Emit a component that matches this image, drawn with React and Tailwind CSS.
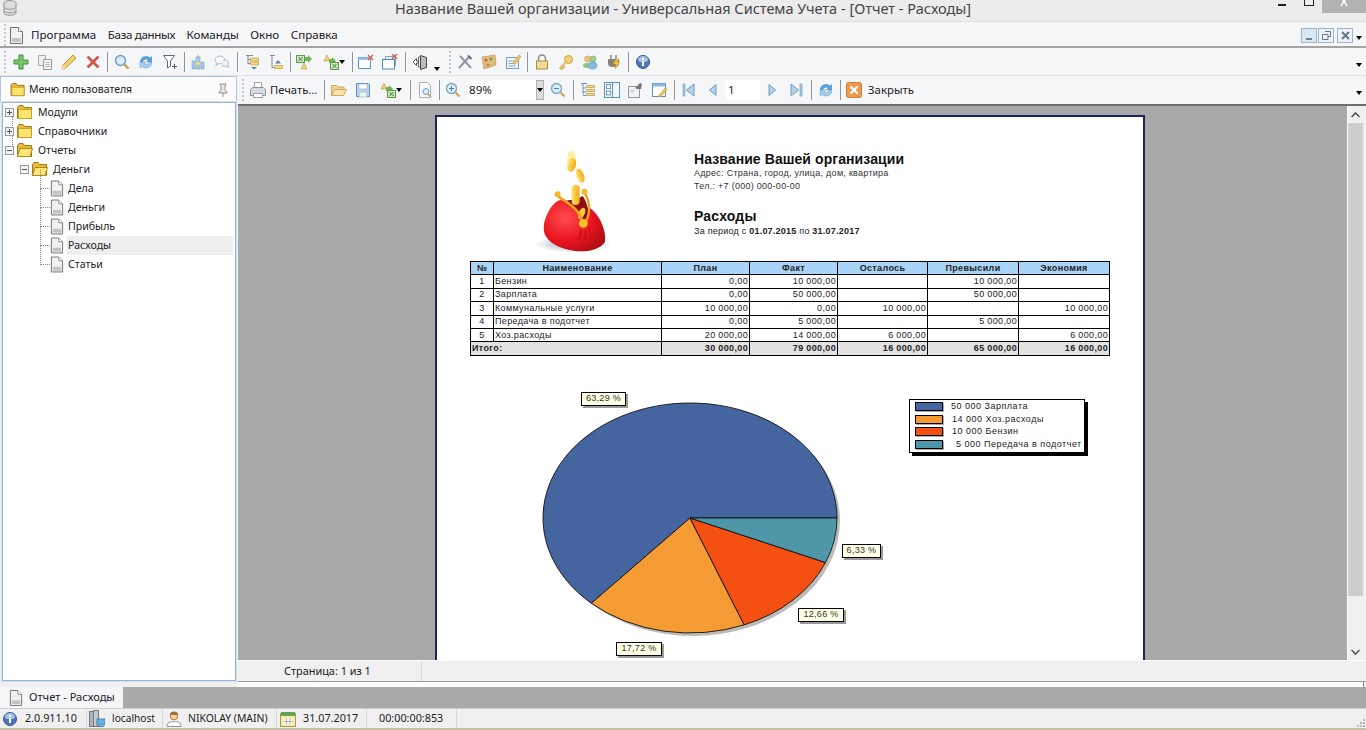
import { useId } from 'react';

const uiFont = "font-['Noto_Sans',sans-serif]";

function Doc({ className = 'w-[15px] h-[17px]' }) {
    return (
        <svg viewBox="0 0 15 17" className={className}>
            <path d="M1.5 .5h8l4 4v12h-12z" fill="#f1f1f1" stroke="#6f6f6f" />
            <path d="M9.5 .5v4h4" fill="#fff" stroke="#8a8a8a" />
            <rect x="3" y="11" width="9" height="4" fill="#c4c4c4" />
        </svg>
    );
}

function Folder({ open = false, className = 'w-[16px] h-[15px]' }) {
    return (
        <svg viewBox="0 0 16 15" className={className}>
            <path d="M.5 13.5v-11l1.5-2h4l1.5 2h7v11z" fill="#e9b93a" stroke="#9c7a1c" />
            {open ? (
                <path d="M.5 13.5l2.5-8h12.5l-2.5 8z" fill="#fde675" stroke="#a98a20" />
            ) : (
                <rect x="1.5" y="4.5" width="13" height="9" fill="#fde56d" stroke="#c7a02c" />
            )}
        </svg>
    );
}

const s = 'w-4 h-4';
const icons = {
    plus: <svg viewBox="0 0 16 16" className={s}><path d="M6 1h4v5h5v4h-5v5H6v-5H1V6h5z" fill="#7cc76a" stroke="#3f8d3a" /></svg>,
    copy: <svg viewBox="0 0 16 16" className={s}><path d="M1.5 1.5h7v10h-7z" fill="#eee" stroke="#aaa" /><path d="M6.5 5.5h8v10h-8z" fill="#f6f6f6" stroke="#999" /><path d="M8 8.5h5M8 10.5h5M8 12.5h5" stroke="#bbb" /></svg>,
    pencil: <svg viewBox="0 0 16 16" className={s}><path d="M1 15l1-4L12 1l3 3L5 14z" fill="#f2cf6a" stroke="#c29a3a" /><path d="M1 15l1-4 3 3z" fill="#f6e3bd" /></svg>,
    del: <svg viewBox="0 0 16 16" className={s}><path d="M2 3.5L3.5 2 8 6.5 12.5 2 14 3.5 9.5 8l4.5 4.5-1.5 1.5L8 9.5 3.5 14 2 12.5 6.5 8z" fill="#d8534a" stroke="#a83a33" strokeWidth=".6" /></svg>,
    search: <svg viewBox="0 0 16 16" className={s}><circle cx="6.5" cy="6.5" r="5" fill="#d8ecfb" stroke="#6b9cc4" strokeWidth="1.4" /><path d="M10.5 10.5l4 4" stroke="#c79a4e" strokeWidth="2.4" /></svg>,
    refresh: <svg viewBox="0 0 16 16" className={s}><path d="M2 8a6 6 0 0 1 10-4.500L14 2v6H8l2-2a3.500 3.500 0 0 0-5 2z" fill="#5c9fd6" /><path d="M14 8a6 6 0 0 1-10 4.500L2 14V8h6l-2 2a3.500 3.500 0 0 0 5-2z" fill="#a9cdea" stroke="#5c9fd6" strokeWidth=".5" /></svg>,
    filter: <svg viewBox="0 0 16 16" className={s}><path d="M1.500 1.500h11L8.500 7v5l-3 2V7z" fill="#fff" stroke="#5a6a78" /><path d="M12.500 10v5M10 12.500h5" stroke="#555" /></svg>,
    building: <svg viewBox="0 0 16 16" className={s}><path d="M2 15V7h3v8zM6 15V3h4v12zM11 15V8h3v7z" fill="#a8cdea" stroke="#6d9dc4" strokeWidth=".6" /><path d="M6 8h4v3H6z" fill="#f3d574" /><path d="M8 0l1 3H7z" fill="#e5b73f" /></svg>,
    chat: <svg viewBox="0 0 16 16" className={s}><path d="M1 6a5 4 0 0 1 10 0 5 4 0 0 1-7 3.600L2 12l.5-3.500A4 4 0 0 1 1 6z" fill="#f7f9fb" stroke="#a9bdcf" /><path d="M9 6.500a3.500 3 0 0 1 5 4l.5 3-2.500-1.500a4 3 0 0 1-4-.5" fill="#eef3f7" stroke="#a9bdcf" /></svg>,
    treeDown: <svg viewBox="0 0 16 16" className={s}><path d="M2 1.500h7M4 1.500v9M4 5.500h2M4 9.500h2" stroke="#7b8a98" fill="none" /><path d="M6.500 4h8v3h-8zM6.500 8h8v3h-8z" fill="#f4d98a" stroke="#c29c3c" strokeWidth=".7" /><path d="M7 13h6l-3 2.500z" fill="#5a7fa8" /></svg>,
    treeUp: <svg viewBox="0 0 16 16" className={s}><path d="M2 1.500h5M4 1.500v12M4 13.500h2" stroke="#7b8a98" fill="none" /><path d="M6.500 11.500h8v3h-8z" fill="#f4d98a" stroke="#c29c3c" strokeWidth=".7" /><path d="M7 9.500h6L10 6z" fill="#5a7fa8" /></svg>,
    excel: <svg viewBox="0 0 16 16" className={s}><rect x=".5" y="1.500" width="8" height="7" fill="#cde5c3" stroke="#5d9a4c" /><path d="M2.500 3l4 4M6.500 3l-4 4" stroke="#3d7d34" /><path d="M9 3h3V1l4 4-4 4V7H9z" fill="#6fb456" /><path d="M5 15l3-6 3 6z" fill="#f2d27a" stroke="#bd9738" strokeWidth=".6" /></svg>,
    excel2: <svg viewBox="0 0 16 16" className={s}><path d="M1 7l3-6 3 6z" fill="#f2d27a" stroke="#bd9738" strokeWidth=".6" /><path d="M6 5h3V3l4 4-4 4V9H6z" fill="#6fb456" /><rect x="7.500" y="8.500" width="8" height="7" fill="#cde5c3" stroke="#5d9a4c" /><path d="M9.500 10l4 4M13.500 10l-4 4" stroke="#3d7d34" /></svg>,
    win: <svg viewBox="0 0 16 16" className={s}><rect x=".5" y="3.500" width="12" height="11" fill="#fff" stroke="#5b93c2" /><rect x=".5" y="3.500" width="12" height="2.500" fill="#9cc4e4" /><path d="M10 1l5 5M15 1l-5 5" stroke="#d2654c" strokeWidth="1.500" /></svg>,
    win2: <svg viewBox="0 0 16 16" className={s}><rect x="3.500" y="2.500" width="10" height="9" fill="#e4eef6" stroke="#7ba6c8" /><rect x=".5" y="5.500" width="12" height="9.500" fill="#fff" stroke="#4f8abb" /><path d="M10 0l5 5M15 0l-5 5" stroke="#d2654c" strokeWidth="1.500" /></svg>,
    exit: <svg viewBox="0 0 16 16" className={s}><path d="M8.500 1.500l6 2v10l-6 2z" fill="#bdbdbd" stroke="#444" /><path d="M8.500 3h-2v10h2" fill="none" stroke="#666" /><path d="M1 8l3.500-3.500V7h2v2h-2v2.500z" fill="#fff" stroke="#333" strokeWidth=".8" /></svg>,
    tools: <svg viewBox="0 0 16 16" className={s}><path d="M2 14L12 3M3 2l11 12" stroke="#8c98a3" strokeWidth="2" /><path d="M11 1.500l3.500 3.500" stroke="#5f6d78" strokeWidth="2" /></svg>,
    paint: <svg viewBox="0 0 16 16" className={s}><path d="M1 3l13-2 1 10-12 4z" fill="#e0bd7c" stroke="#b4935a" strokeWidth=".7" /><circle cx="5" cy="6" r="1.500" fill="#d9573c" /><circle cx="10" cy="5" r="1.500" fill="#6d9b4b" /><circle cx="7" cy="11" r="1.500" fill="#c9843b" /></svg>,
    edit: <svg viewBox="0 0 16 16" className={s}><rect x="1.500" y="3.500" width="12" height="11" fill="#eef4fa" stroke="#7ba0c0" /><path d="M3.500 7h6M3.500 9.500h7M3.500 12h7" stroke="#8aa9c4" /><path d="M8 9l6-8 2 1.500-6 8z" fill="#f1c75d" stroke="#b79236" strokeWidth=".6" /></svg>,
    lock: <svg viewBox="0 0 16 16" className={s}><path d="M4.500 7V4.500a3.500 3.500 0 0 1 7 0V7" fill="none" stroke="#8a8a80" strokeWidth="1.500" /><rect x="2.500" y="7" width="11" height="8" fill="#f1d892" stroke="#a89048" /></svg>,
    key: <svg viewBox="0 0 16 16" className={s}><circle cx="10.500" cy="5.500" r="4" fill="#f3d274" stroke="#c6a03c" /><path d="M7.500 8L2 13.500V15h3v-2h2" fill="#f3d274" stroke="#c6a03c" /></svg>,
    users: <svg viewBox="0 0 16 16" className={s}><circle cx="5.500" cy="5" r="3" fill="#f2c07c" stroke="#c79a57" strokeWidth=".6" /><circle cx="11" cy="5" r="3" fill="#9ad08a" stroke="#6ba85c" strokeWidth=".6" /><ellipse cx="4.500" cy="11.500" rx="3.500" ry="2.500" fill="#94c67f" /><ellipse cx="10.500" cy="11.500" rx="4.500" ry="3.500" fill="#86b8e0" stroke="#5f94c0" strokeWidth=".6" /></svg>,
    plug: <svg viewBox="0 0 16 16" className={s}><path d="M5 1v4M10 1v4" stroke="#8a8a8a" strokeWidth="1.500" /><path d="M2 5h11v4a4 4 0 0 1-4 4H6a4 4 0 0 1-4-4z" fill="#8b8178" /><path d="M10 5l-3 5h3l-1 5 5-7h-3l2-3z" fill="#f2c33c" stroke="#bc8e1e" strokeWidth=".4" /></svg>,
    info: <svg viewBox="0 0 16 16" className={s}><circle cx="8" cy="8" r="6.500" fill="#4f77b5" stroke="#39598e" /><path d="M3 6a5 4 0 0 1 10 0 5 2 0 0 1-10 0" fill="#a7c2e6" /><rect x="7" y="7" width="2" height="5" fill="#fff" /><rect x="7" y="4" width="2" height="2" fill="#fff" /></svg>,
    printer: <svg viewBox="0 0 18 18" className="w-[18px] h-[18px]"><path d="M5.500 1.500h7v6h-7z" fill="#fff" stroke="#9aa3ab" /><path d="M1.500 8.500l2-2h11l2 2v6h-15z" fill="#d6dbe0" stroke="#8d969e" /><path d="M4.500 12.500h9v4h-9z" fill="#fff" stroke="#9aa3ab" /></svg>,
    openFolder: <svg viewBox="0 0 16 16" className={s}><path d="M.5 13.500v-10h5l1.500 1.500h6v2" fill="#f1d390" stroke="#c9a863" /><path d="M.5 13.500l3-6h12l-3 6z" fill="#f9e2a9" stroke="#c9a863" /></svg>,
    save: <svg viewBox="0 0 16 16" className={s}><path d="M1.500 1.500h12l1 1v12h-13z" fill="#bcd6ec" stroke="#5b8fba" /><rect x="4" y="2" width="8" height="5" fill="#fff" stroke="#8eb1cf" strokeWidth=".6" /><rect x="4" y="10" width="8" height="5" fill="#eef3f7" stroke="#8eb1cf" strokeWidth=".6" /></svg>,
    preview: <svg viewBox="0 0 16 16" className={s}><path d="M2.500 .5h8l3 3v12h-11z" fill="#fafafa" stroke="#aab1b8" /><circle cx="9" cy="9.500" r="3" fill="#dceaf6" stroke="#6f9fc6" /><path d="M11 12l3 3" stroke="#d0a25a" strokeWidth="1.600" /></svg>,
    zoomIn: <svg viewBox="0 0 16 16" className={s}><circle cx="6.500" cy="6.500" r="5" fill="#dcecf9" stroke="#7aa4c6" strokeWidth="1.300" /><path d="M4 6.500h5M6.500 4v5" stroke="#4f83ae" /><path d="M10.500 10.500l4 4" stroke="#d0a25a" strokeWidth="2.200" /></svg>,
    zoomOut: <svg viewBox="0 0 16 16" className={s}><circle cx="6.500" cy="6.500" r="5" fill="#dcecf9" stroke="#7aa4c6" strokeWidth="1.300" /><path d="M4 6.500h5" stroke="#4f83ae" /><path d="M10.500 10.500l4 4" stroke="#d0a25a" strokeWidth="2.200" /></svg>,
    tree: <svg viewBox="0 0 16 16" className={s}><path d="M1 1.500h6M3 1.500v11M3 6h3M3 10h3M3 13.500h3" stroke="#6d93b3" fill="none" /><path d="M6.500 3.500h8v2h-8zM6.500 7.500h8v2h-8zM6.500 11.500h8v2h-8z" fill="#f3d98c" stroke="#bf9a3a" strokeWidth=".7" /></svg>,
    layout: <svg viewBox="0 0 16 16" className={s}><rect x=".5" y=".5" width="15" height="15" fill="#f4f8fb" stroke="#5a93be" /><rect x="2.500" y="2.500" width="4" height="4" fill="none" stroke="#6f9cc0" /><rect x="2.500" y="9" width="4" height="4" fill="none" stroke="#6f9cc0" /><path d="M8.500 1v14" stroke="#5a93be" /></svg>,
    thumbs: <svg viewBox="0 0 16 16" className={s}><rect x=".5" y="4.500" width="11" height="11" fill="#f2f2f2" stroke="#8d98a3" /><path d="M2.500 7.500h3v3h-3z" fill="#bcd3e6" /><path d="M7 6l5-5 2 1-1 5h-4z" fill="#777" /></svg>,
    pageEdit: <svg viewBox="0 0 16 16" className={s}><rect x=".5" y="1.500" width="13" height="13" fill="#fdfdfd" stroke="#5a93be" /><rect x=".5" y="1.500" width="13" height="3" fill="#8fb9da" /><path d="M7 13l6-7 2 1.500-6 7-2.500 .5z" fill="#f1c75d" stroke="#b79236" strokeWidth=".6" /></svg>,
    first: <svg viewBox="0 0 16 16" className={s}><rect x="2" y="2" width="2" height="12" fill="#a8c8e2" stroke="#6c9cc2" strokeWidth=".6" /><path d="M13 2v12L5.500 8z" fill="#b7d2e8" stroke="#6c9cc2" /></svg>,
    prev: <svg viewBox="0 0 16 16" className={s}><path d="M11 2.500v11L4.500 8z" fill="#b7d2e8" stroke="#6c9cc2" /></svg>,
    next: <svg viewBox="0 0 16 16" className={s}><path d="M5 2.500v11L11.500 8z" fill="#b7d2e8" stroke="#6c9cc2" /></svg>,
    last: <svg viewBox="0 0 16 16" className={s}><rect x="12" y="2" width="2" height="12" fill="#a8c8e2" stroke="#6c9cc2" strokeWidth=".6" /><path d="M3 2v12l7.500-6z" fill="#b7d2e8" stroke="#6c9cc2" /></svg>,
    closeBox: <svg viewBox="0 0 16 16" className={s}><rect x=".5" y=".5" width="15" height="15" rx="2" fill="#ec9a4f" stroke="#cf7d33" /><path d="M4.500 4.500l7 7M11.500 4.500l-7 7" stroke="#fff" strokeWidth="2.200" /></svg>,
    server: <svg viewBox="0 0 16 18" className="w-4 h-[18px]"><rect x=".5" y="1.500" width="4" height="15" fill="#aeb4ba" stroke="#70777e" /><rect x="4.500" y=".5" width="5" height="16" fill="#c5cacf" stroke="#70777e" /><rect x="8" y="9" width="8" height="6" fill="#65b2e2" stroke="#3c85b5" /><path d="M10 16.500h5" stroke="#3c85b5" /></svg>,
    user: <svg viewBox="0 0 16 16" className={s}><circle cx="8" cy="5" r="3.800" fill="#f6cfa0" stroke="#b4783e" /><path d="M4 4a4 3.500 0 0 1 8 0z" fill="#a86e36" /><path d="M1 15.500c0-4 3-5 7-5s7 1 7 5z" fill="#fff" stroke="#8a98a6" /></svg>,
    calendar: <svg viewBox="0 0 16 16" className={s}><rect x=".5" y="2.500" width="15" height="13" fill="#f6e7ac" stroke="#a79a55" /><rect x="1" y="1" width="14" height="4" fill="#5fa652" /><path d="M3 7.500h10v6H3z" fill="#fdf8da" /><path d="M6.500 7.500v6M10 7.500v6M3 10.500h10" stroke="#7fa2c4" strokeWidth=".7" /></svg>,
};

function Tool({ name, className = '' }) {
    return <div className={`flex h-full w-6 shrink-0 items-center justify-center ${className}`}>{icons[name]}</div>;
}

function Sep({ className = 'mx-[2px]' }) {
    return <div className={`h-[20px] w-px shrink-0 bg-[#8f9499] ${className}`} />;
}

function Grip({ className = '' }) {
    return <div className={`h-[22px] w-0 shrink-0 border-l-2 border-dotted border-[#c4c7ca] ${className}`} />;
}

function Drop({ className = '' }) {
    return <div className={`h-0 w-0 shrink-0 border-x-[3.5px] border-t-[4px] border-x-transparent border-t-black ${className}`} />;
}

function TreeRow({ level, type, open, label, selected, lineUp }) {
    const left = [0, 15, 45][level];
    const box = type === 'folder';
    return (
        <div className="relative flex h-[19px] items-center" style={{ paddingLeft: left }}>
            {lineUp && <span className="absolute left-[7px] top-[-9px] h-[19px] border-l border-dotted border-[#888]" />}
            {box ? (
                <span className="z-10 mr-[3px] flex h-[9px] w-[9px] shrink-0 items-center justify-center border border-[#9a9a9a] bg-[#f3f3f3] text-[9px] leading-none text-[#555]">
                    <span className="relative block h-px w-[5px] bg-[#555]">
                        {!open && <span className="absolute left-[2px] top-[-2px] block h-[5px] w-px bg-[#555]" />}
                    </span>
                </span>
            ) : (
                <span className="absolute left-[35px] top-[-9px] h-[19px] w-[10px] border-b border-l border-dotted border-[#888]" />
            )}
            <span className="shrink-0">{box ? <Folder open={open} /> : <Doc className="h-[17px] w-[14px]" />}</span>
            <span className={`flex-1 pl-[1px] text-[10.6px] leading-[19px] text-[#222] ${box ? 'ml-[4px]' : 'ml-[3px]'} ${selected ? 'bg-[#efefef]' : ''}`}>{label}</span>
        </div>
    );
}

function Purse() {
    const id = useId();
    return (
        <svg viewBox="0 0 300 345" className="h-[115px] w-[100px]">
            <defs>
                <radialGradient id={id + 'r'} cx="35%" cy="35%" r="80%">
                    <stop offset="0" stopColor="#ff4c50" />
                    <stop offset=".55" stopColor="#ea1420" />
                    <stop offset="1" stopColor="#a80c12" />
                </radialGradient>
                <linearGradient id={id + 'c'} x1="0" y1="0" x2="1" y2="0">
                    <stop offset="0" stopColor="#fde26a" />
                    <stop offset="1" stopColor="#f3a916" />
                </linearGradient>
                <radialGradient id={id + 's'}>
                    <stop offset="0" stopColor="#8fa6ad" />
                    <stop offset="1" stopColor="#ffffff" />
                </radialGradient>
            </defs>
            <ellipse cx="145" cy="298" rx="115" ry="24" fill={`url(#${id}s)`} />
            <ellipse cx="140" cy="45" rx="14" ry="28" fill="#fff0a8" />
            <ellipse cx="140" cy="60" rx="13" ry="21" fill={`url(#${id}c)`} transform="rotate(15 140 60)" />
            <ellipse cx="166" cy="92" rx="11" ry="22" fill={`url(#${id}c)`} transform="rotate(-20 166 92)" />
            <path d="M60 225C70 195 85 172 105 165L195 190C225 210 245 260 240 290 225 315 180 322 150 318 105 312 70 295 58 265 55 250 56 235 60 225z" fill={`url(#${id}r)`} />
            <path d="M110 168C130 170 150 185 165 215L178 235 190 205C190 185 180 160 172 152 160 165 130 165 110 168z" fill="#8e0d12" />
            <rect x="140" y="120" width="24" height="60" rx="11" fill={`url(#${id}c)`} />
            <ellipse cx="170" cy="205" rx="9" ry="18" fill="#fbcb36" transform="rotate(25 170 205)" />
            <path d="M98 152C115 168 148 180 163 208L175 235" fill="none" stroke="#efa21d" strokeWidth="8" />
            <path d="M178 142C192 165 202 195 180 235" fill="none" stroke="#efa21d" strokeWidth="7" />
            <path d="M168 255l-6 28M180 255l2 30M190 250l10 24" stroke="#b40d14" strokeWidth="3" fill="none" />
            <circle cx="98" cy="148" r="9" fill="#f7b82c" />
            <circle cx="178" cy="140" r="9" fill="#f7b82c" />
            <circle cx="175" cy="235" r="13" fill="#f9bf2f" stroke="#dc8f13" strokeWidth="2" />
        </svg>
    );
}

const COLS = ['w-[23px]', 'w-[168px]', 'w-[88px]', 'w-[88px]', 'w-[90px]', 'w-[91px]', 'w-[91px]'];
const rows = [
    ['1', 'Бензин', '0,00', '10 000,00', '', '10 000,00', ''],
    ['2', 'Зарплата', '0,00', '50 000,00', '', '50 000,00', ''],
    ['3', 'Коммунальные услуги', '10 000,00', '0,00', '10 000,00', '', '10 000,00'],
    ['4', 'Передача в подотчет', '0,00', '5 000,00', '', '5 000,00', ''],
    ['5', 'Хоз.расходы', '20 000,00', '14 000,00', '6 000,00', '', '6 000,00'],
];
const head = ['№', 'Наименование', 'План', 'Факт', 'Осталось', 'Превысили', 'Экономия'];

function ReportTable() {
    const td = 'h-[13.4px] border border-black px-[1px] py-0 leading-none';
    return (
        <table className="w-[639px] table-fixed border-collapse text-[9px] tracking-[0.35px] text-[#222]">
            <colgroup>
                {COLS.map((c, i) => <col key={i} className={c} />)}
            </colgroup>
            <thead>
                <tr className="bg-[#a9d3f7]">
                    {head.map((h) => <th key={h} className={`${td} text-center font-bold`}>{h}</th>)}
                </tr>
            </thead>
            <tbody>
                {rows.map((r) => (
                    <tr key={r[0]}>
                        {r.map((v, i) => (
                            <td key={i} className={`${td} ${i === 0 ? 'text-center' : i === 1 ? 'text-left' : 'text-right'}`}>{v}</td>
                        ))}
                    </tr>
                ))}
                <tr className="bg-[#e2e2e2] font-bold">
                    <td colSpan={2} className={td}>Итого:</td>
                    {['30 000,00', '79 000,00', '16 000,00', '65 000,00', '16 000,00'].map((v, i) => (
                        <td key={i} className={`${td} text-right`}>{v}</td>
                    ))}
                </tr>
            </tbody>
        </table>
    );
}

const slices = [
    { pct: 63.29, color: '#4565a0' },
    { pct: 17.72, color: '#f49c33' },
    { pct: 12.66, color: '#f35012' },
    { pct: 6.33, color: '#4d97a8' },
];

function Pie() {
    const cx = 150, cy = 118, rx = 147, ry = 115;
    let acc = 0;
    const paths = slices.map((sl) => {
        const a0 = (acc / 100) * 2 * Math.PI;
        acc += sl.pct;
        const a1 = (acc / 100) * 2 * Math.PI;
        const x0 = cx + rx * Math.cos(a0), y0 = cy - ry * Math.sin(a0);
        const x1 = cx + rx * Math.cos(a1), y1 = cy - ry * Math.sin(a1);
        const large = sl.pct > 50 ? 1 : 0;
        return <path key={sl.color} d={`M${cx} ${cy}L${x0} ${y0}A${rx} ${ry} 0 ${large} 0 ${x1} ${y1}Z`} fill={sl.color} stroke="#111" strokeWidth=".9" />;
    });
    return (
        <svg width="310" height="245" viewBox="0 0 310 245" className="absolute left-[103px] top-[44px]">
            <ellipse cx={cx + 3} cy={cy + 3} rx={rx} ry={ry} fill="#bbb" />
            {paths}
        </svg>
    );
}

function PieLabel({ className, children }) {
    return (
        <div className={`absolute flex h-[14px] items-center justify-center border border-black bg-[#ffffe6] text-[9px] tracking-[0.3px] text-[#333] shadow-[2px_2px_0_#9a9a9a] ${className}`}>
            {children}
        </div>
    );
}

const legend = [
    { color: '#4565a0', text: '50 000 Зарплата', pad: 'pl-[8px]' },
    { color: '#f49c33', text: '14 000 Хоз.расходы', pad: 'pl-[9px]' },
    { color: '#f35012', text: '10 000 Бензин', pad: 'pl-[9px]' },
    { color: '#4d97a8', text: '5 000 Передача в подотчет', pad: 'pl-[13px]' },
];

function Legend() {
    return (
        <div className="absolute left-[472px] top-[43px] flex h-[54px] w-[176px] flex-col justify-center gap-[3px] border border-black bg-white pl-[5px] shadow-[3px_3px_0_#000]">
            {legend.map((l) => (
                <div key={l.color} className="flex h-[9.5px] items-center">
                    <span className="h-[9px] w-[28px] shrink-0 border border-black shadow-[1px_1px_0_#aaa]" style={{ backgroundColor: l.color }} />
                    <span className={`whitespace-nowrap text-[9px] tracking-[0.5px] text-[#222] ${l.pad}`}>{l.text}</span>
                </div>
            ))}
        </div>
    );
}

function ReportPage() {
    return (
        <div className="ml-[197px] mt-[9px] h-[700px] w-[710px] shrink-0 border-x-2 border-t-2 border-[#17265c] bg-white font-['Liberation_Sans',sans-serif]">
            <div className="flex h-[144px]">
                <div className="ml-[88px] mt-[28px] w-[169px] shrink-0">
                    <Purse />
                </div>
                <div className="pt-[34px] text-[#111]">
                    <div className="text-[14px] font-bold leading-[16px] tracking-[0.08px]">Название Вашей организации</div>
                    <div className="text-[9px] leading-[12px] tracking-[0.27px] text-[#333]">Адрес: Страна, город, улица, дом, квартира</div>
                    <div className="mt-[1px] text-[9px] leading-[12px] tracking-[0.27px] text-[#333]">Тел.: +7 (000) 000-00-00</div>
                    <div className="mt-[16px] text-[14px] font-bold leading-[16px] tracking-[0.2px]">Расходы</div>
                    <div className="text-[9px] leading-[14px] tracking-[0.23px] text-[#222]">
                        За период с <b>01.07.2015</b> по <b>31.07.2017</b>
                    </div>
                </div>
            </div>
            <div className="pl-[33px]">
                <ReportTable />
            </div>
            <div className="relative h-[300px]">
                <Pie />
                <PieLabel className="left-[144px] top-[36px] w-[45px]">63,29 %</PieLabel>
                <PieLabel className="left-[405px] top-[188px] w-[39px]">6,33 %</PieLabel>
                <PieLabel className="left-[361px] top-[252px] w-[46px]">12,66 %</PieLabel>
                <PieLabel className="left-[179px] top-[286px] w-[46px]">17,72 %</PieLabel>
                <Legend />
            </div>
        </div>
    );
}

function Scrollbar() {
    return (
        <div className="flex w-[19px] shrink-0 flex-col border-l border-white bg-[#f0f0f0] pr-[3px]">
            <div className="flex h-[17px] items-center justify-center">
                <svg viewBox="0 0 9 6" className="h-[6px] w-[9px]"><path d="M.5 5l4-4 4 4" fill="none" stroke="#505050" strokeWidth="1.500" /></svg>
            </div>
            <div className="h-[473px] bg-[#cdcdcd]" />
            <div className="flex-1" />
            <div className="flex h-[17px] items-center justify-center">
                <svg viewBox="0 0 9 6" className="h-[6px] w-[9px]"><path d="M.5 1l4 4 4-4" fill="none" stroke="#505050" strokeWidth="1.500" /></svg>
            </div>
        </div>
    );
}

function StatusItem({ icon, children, className = '' }) {
    return (
        <div className={`flex h-full shrink-0 items-center border-r border-[#d8d8d8] ${className}`}>
            {icon}
            {children}
        </div>
    );
}

export default function App() {
    return (
        <div className={`flex h-[730px] w-[1366px] flex-col overflow-hidden bg-[#f0f0f0] text-[11.6px] text-[#222] ${uiFont}`}>
            {/* title bar */}
            <div className="relative flex h-[22px] shrink-0 items-start justify-center border-b border-[#e0e0e0] bg-[#ececec]">
                <svg viewBox="0 0 14 16" className="absolute left-[3px] top-0 h-[16px] w-[14px]">
                    <ellipse cx="7" cy="3" rx="6" ry="2.500" fill="#ddd" stroke="#999" />
                    <path d="M1 3v10c0 3 12 3 12 0V3" fill="#ddd" stroke="#999" />
                    <path d="M1 7c0 3 12 3 12 0M1 10.500c0 3 12 3 12 0" fill="none" stroke="#999" />
                </svg>
                <span className="text-[14.5px] leading-[17px] text-[#444]">Название Вашей организации - Универсальная Система Учета - [Отчет - Расходы]</span>
                <span className="absolute left-[1278px] top-[4px] h-[2px] w-[8px] bg-[#222]" />
                <span className="absolute left-[1304px] top-0 h-[6px] w-[10px] border border-t-0 border-[#222]" />
                <span className="absolute right-0 top-0 flex h-[13px] w-[44px] items-start justify-center bg-[#b3b3b3]">
                    <svg viewBox="0 0 10 7" className="h-[7px] w-[10px]"><path d="M2 -3l6 9M8 -3L2 6" fill="none" stroke="#fff" strokeWidth="1.500" /></svg>
                </span>
            </div>

            {/* menu */}
            <div className="flex h-[26px] shrink-0 items-center border-b-2 border-[#a3a3a3] bg-[#f5f6f8] pt-[2px]">
                <Grip className="ml-[4px]" />
                <div className="ml-[3px] mr-[7px]"><Doc className="h-[17px] w-[15px]" /></div>
                <div className="flex gap-[11.5px]">
                    <span>Программа</span>
                    <span className="tracking-[-0.35px]">База данных</span>
                    <span>Команды</span>
                    <span>Окно</span>
                    <span>Справка</span>
                </div>
                <div className="ml-auto flex items-center">
                    <div className="flex h-[15px] w-[16px] items-end justify-center border border-[#9fb4c7] bg-[#d8e8f5] pb-[2px]"><span className="h-[2px] w-[6px] bg-[#6d8193]" /></div>
                    <div className="ml-[1px] flex h-[15px] w-[16px] items-center justify-center border border-[#9fb4c7] bg-[#f0f3f6]">
                        <svg viewBox="0 0 9 9" className="h-[9px] w-[9px]"><path d="M3 .5h5.500v5H6M.5 3.500h5.500v5H.5z" fill="none" stroke="#64788a" /></svg>
                    </div>
                    <div className="ml-[3px] flex h-[15px] w-[16px] items-center justify-center border border-[#9fb4c7] bg-[#f0f3f6]">
                        <svg viewBox="0 0 9 9" className="h-[9px] w-[9px]"><path d="M1 1l7 7M8 1L1 8" stroke="#64788a" strokeWidth="2" /></svg>
                    </div>
                    <Drop className="ml-[3px] mr-[4px] mt-[6px]" />
                </div>
            </div>

            {/* main toolbar */}
            <div className="flex h-[28px] shrink-0 items-center border-b border-[#e2e2e2] bg-[#f5f6f8]">
                <Grip className="ml-[4px] mr-[3px]" />
                <Tool name="plus" />
                <Tool name="copy" />
                <Tool name="pencil" />
                <Tool name="del" />
                <Sep />
                <Tool name="search" />
                <Tool name="refresh" />
                <Tool name="filter" />
                <Sep className="ml-[2px] mr-[1px]" />
                <Tool name="building" />
                <Tool name="chat" />
                <Sep className="ml-[3px] mr-[2px]" />
                <Tool name="treeDown" />
                <Tool name="treeUp" />
                <Sep className="ml-[2px] mr-[1px]" />
                <Tool name="excel" />
                <Tool name="excel2" className="ml-[3px]" />
                <Drop className="-ml-[4px]" />
                <Sep className="ml-[7px] mr-[1px]" />
                <Tool name="win" />
                <Tool name="win2" />
                <Sep className="ml-[3px] mr-[2px]" />
                <Tool name="exit" />
                <Drop className="ml-[2px] mt-[14px]" />
                <Grip className="ml-[9px] mr-[2px]" />
                <Tool name="tools" />
                <Tool name="paint" />
                <Tool name="edit" />
                <Sep />
                <Tool name="lock" />
                <Tool name="key" />
                <Tool name="users" />
                <Tool name="plug" />
                <Sep />
                <Tool name="info" />
                <Drop className="ml-auto mr-[4px] mt-[6px]" />
            </div>

            {/* body */}
            <div className="flex min-h-0 flex-1">
                {/* user menu */}
                <div className="flex w-[238px] shrink-0 flex-col pb-[6px]">
                    <div className="mr-[1px] flex h-[26px] shrink-0 items-center border border-b-0 border-[#a9c8e8] bg-[#fcfcfc] pl-[9px] pr-[7px] pt-[1px]">
                        <Folder className="h-[14px] w-[16px]" />
                        <span className="ml-[3px] text-[10.5px]">Меню пользователя</span>
                        <svg viewBox="0 0 12 14" className="ml-auto h-[14px] w-[12px]">
                            <path d="M3 1h6v1L8 3v4l2 2v1H2V9l2-2V3L3 2zM6 10v4" fill="#e8e8e8" stroke="#777" strokeWidth=".8" />
                        </svg>
                    </div>
                    <div className="mx-[2px] flex-1 border border-[#9cb4cc] bg-white px-[2px] pt-0 outline outline-[#cfe0f1]">
                        <TreeRow level={0} type="folder" label="Модули" />
                        <TreeRow level={0} type="folder" label="Справочники" lineUp />
                        <TreeRow level={0} type="folder" open label="Отчеты" lineUp />
                        <TreeRow level={1} type="folder" open label="Деньги" lineUp={false} />
                        <TreeRow level={2} type="doc" label="Дела" />
                        <TreeRow level={2} type="doc" label="Деньги" />
                        <TreeRow level={2} type="doc" label="Прибыль" />
                        <TreeRow level={2} type="doc" label="Расходы" selected />
                        <TreeRow level={2} type="doc" label="Статьи" />
                    </div>
                </div>

                {/* report */}
                <div className="flex min-w-0 flex-1 flex-col">
                    <div className="flex h-[30px] shrink-0 items-center border-b-2 border-[#6e6e6e] bg-[#f5f6f8]">
                        <Grip className="ml-[4px] mr-[3px]" />
                        <Tool name="printer" className="!w-[22px]" />
                        <span className="ml-[1px] w-[48px] whitespace-nowrap text-[11.2px]">Печать...</span>
                        <Sep className="ml-[6px] mr-[2px]" />
                        <Tool name="openFolder" />
                        <Tool name="save" />
                        <Tool name="excel2" className="ml-[1px]" />
                        <Drop className="-ml-[4px]" />
                        <Sep className="ml-[8px] mr-[2px]" />
                        <Tool name="preview" />
                        <Sep className="ml-[2px] mr-[1px]" />
                        <Tool name="zoomIn" />
                        <div className="ml-[2px] flex h-[20px] w-[77px] shrink-0 items-center bg-white pl-[2px]">
                            89%
                            <div className="ml-auto flex h-full w-[8px] items-center justify-center border border-[#b0b0b0] bg-[#dcdcdc]"><Drop /></div>
                        </div>
                        <Tool name="zoomOut" className="ml-[2px]" />
                        <Sep className="ml-[3px] mr-[2px]" />
                        <Tool name="tree" />
                        <Tool name="layout" />
                        <Tool name="thumbs" />
                        <Tool name="pageEdit" />
                        <Sep />
                        <Tool name="first" />
                        <Tool name="prev" />
                        <div className="ml-[1px] flex h-[20px] w-[34px] shrink-0 items-center bg-white pl-[2px]">1</div>
                        <Tool name="next" />
                        <Tool name="last" />
                        <Sep className="ml-[3px] mr-[2px]" />
                        <Tool name="refresh" />
                        <Sep className="ml-[2px] mr-[1px]" />
                        <Tool name="closeBox" />
                        <span className="ml-[2px] text-[11.4px]">Закрыть</span>
                        <Drop className="ml-auto mr-[4px] mt-[6px]" />
                    </div>
                    <div className="flex min-h-0 flex-1">
                        <div className="min-w-0 flex-1 overflow-hidden bg-[#a9a9a9]">
                            <ReportPage />
                        </div>
                        <Scrollbar />
                    </div>
                    <div className="flex h-[22px] shrink-0 items-center border-b border-t border-b-[#9a9a9a] border-t-white bg-[#f0f0f0]">
                        <div className="flex h-full w-[184px] items-center border-r border-[#dcdcdc] pl-[46px] text-[10.9px]">Страница: 1 из 1</div>
                    </div>
                    <div className="mr-[2px] h-[5px] shrink-0 border-r border-[#8a8a8a] bg-white" />
                </div>
            </div>

            {/* tabs */}
            <div className="flex h-[21px] shrink-0 bg-[#a9a9a9]">
                <div className="flex w-[123px] items-center bg-[#f5f6f8] pl-[9px]">
                    <Doc className="h-[16px] w-[14px]" />
                    <span className="ml-[6px] text-[11.1px]">Отчет - Расходы</span>
                </div>
            </div>

            {/* status */}
            <div className="relative flex h-[22px] shrink-0 items-center border-b-2 border-t border-b-[#c4bfa6] border-t-[#cfcfcf] bg-[#f0f0f0] text-[10.8px]">
                <StatusItem className="w-[87px] pl-[2px]" icon={icons.info}><span className="ml-[7px]">2.0.911.10</span></StatusItem>
                <StatusItem className="w-[76px] pl-[2px]" icon={icons.server}><span className="ml-[7px] text-[10.2px]">localhost</span></StatusItem>
                <StatusItem className="w-[114px] pl-[3px]" icon={icons.user}><span className="ml-[6px] text-[10.4px]">NIKOLAY (MAIN)</span></StatusItem>
                <StatusItem className="w-[90px] pl-[3px]" icon={icons.calendar}><span className="ml-[7px]">31.07.2017</span></StatusItem>
                <StatusItem className="w-[90px] pl-[12px]"><span>00:00:00:853</span></StatusItem>
                <svg viewBox="0 0 9 9" className="absolute bottom-[1px] right-0 h-[9px] w-[9px]">
                    <path d="M6 1h2v2H6zM3 4h2v2H3zM6 4h2v2H6zM0 7h2v2H0zM3 7h2v2H3zM6 7h2v2H6z" fill="#b5b5b5" />
                </svg>
            </div>
        </div>
    );
}
